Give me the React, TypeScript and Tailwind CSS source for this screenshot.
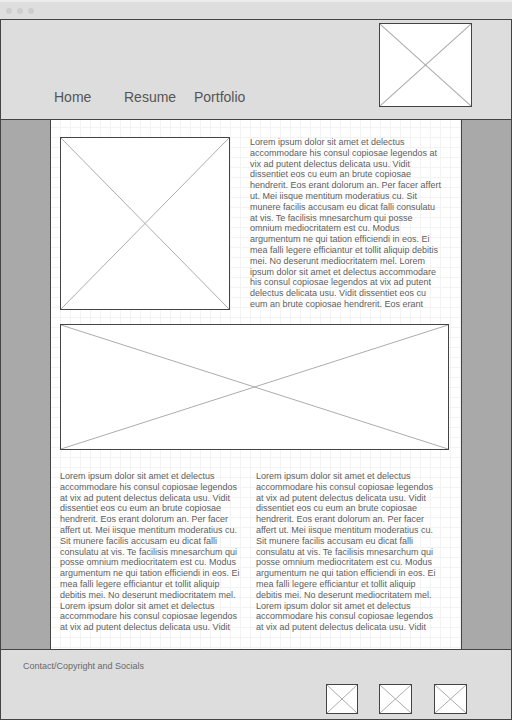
import React from 'react';

const LOREM_TOP =
  'Lorem ipsum dolor sit amet et delectus accommodare his consul copiosae legendos at vix ad putent delectus delicata usu. Vidit dissentiet eos cu eum an brute copiosae hendrerit. Eos erant dolorum an. Per facer affert ut. Mei iisque mentitum moderatius cu. Sit munere facilis accusam eu dicat falli consulatu at vis. Te facilisis mnesarchum qui posse omnium mediocritatem est cu. Modus argumentum ne qui tation efficiendi in eos. Ei mea falli legere efficiantur et tollit aliquip debitis mei. No deserunt mediocritatem mel. Lorem ipsum dolor sit amet et delectus accommodare his consul copiosae legendos at vix ad putent delectus delicata usu. Vidit dissentiet eos cu eum an brute copiosae hendrerit. Eos erant';

const LOREM_COL =
  'Lorem ipsum dolor sit amet et delectus accommodare his consul copiosae legendos at vix ad putent delectus delicata usu. Vidit dissentiet eos cu eum an brute copiosae hendrerit. Eos erant dolorum an. Per facer affert ut. Mei iisque mentitum moderatius cu. Sit munere facilis accusam eu dicat falli consulatu at vis. Te facilisis mnesarchum qui posse omnium mediocritatem est cu. Modus argumentum ne qui tation efficiendi in eos. Ei mea falli legere efficiantur et tollit aliquip debitis mei. No deserunt mediocritatem mel. Lorem ipsum dolor sit amet et delectus accommodare his consul copiosae legendos at vix ad putent delectus delicata usu. Vidit';

// wireframe image placeholder: box with an X across it
const Placeholder: React.FC<{ className?: string }> = ({ className = '' }) => (
  <div className={`relative shrink-0 border border-[#444] bg-white ${className}`}>
    <svg className="absolute inset-0 h-full w-full" viewBox="0 0 100 100" preserveAspectRatio="none">
      <line x1="0" y1="0" x2="100" y2="100" stroke="#acacac" strokeWidth="1" vectorEffect="non-scaling-stroke" />
      <line x1="100" y1="0" x2="0" y2="100" stroke="#acacac" strokeWidth="1" vectorEffect="non-scaling-stroke" />
    </svg>
  </div>
);

const Lorem: React.FC<{ text: string; className?: string }> = ({ text, className = '' }) => (
  <p className={`text-[9px] leading-[10.8px] text-[#5e5e5e] ${className}`}>{text}</p>
);

const App: React.FC = () => {
  return (
    <div className="flex h-[720px] w-[512px] flex-col bg-white font-['Liberation_Sans',Arial,sans-serif]">
      {/* window chrome */}
      <div className="flex h-[19px] shrink-0 items-center gap-[5px] border-t-2 border-[#ececec] bg-[#dedede] pl-[6px]">
        <span className="h-[6px] w-[6px] rounded-full bg-[#cdcdcd]" />
        <span className="h-[6px] w-[6px] rounded-full bg-[#cdcdcd]" />
        <span className="h-[6px] w-[6px] rounded-full bg-[#cdcdcd]" />
      </div>

      <div className="flex flex-1 flex-col border border-[#444]">
        {/* header */}
        <header className="flex h-[100px] shrink-0 justify-between border-b border-[#444] bg-[#dddddd]">
          <nav className="flex pl-[53px] pt-[69px] text-[14px] leading-[16px] text-[#555]">
            <span className="w-[70px]">Home</span>
            <span className="w-[70px]">Resume</span>
            <span>Portfolio</span>
          </nav>
          <Placeholder className="mr-[39px] mt-[3px] h-[84px] w-[93px]" />
        </header>

        {/* main */}
        <main className="flex h-[530px] shrink-0 border-b border-[#444]">
          <div className="w-[49px] bg-[#a9a9a9]" />
          <div className="w-[412px] border-x border-[#444] bg-white bg-[linear-gradient(to_right,#f3f3f3_1px,transparent_1px),linear-gradient(to_bottom,#f3f3f3_1px,transparent_1px)] bg-[size:10px_10px] bg-[position:9px_7px] pl-[9px] pt-[17px]">
            <div className="flex">
              <Placeholder className="h-[173px] w-[170px]" />
              <Lorem text={LOREM_TOP} className="ml-[20px] w-[195px]" />
            </div>
            <Placeholder className="mt-[14px] h-[126px] w-[389px]" />
            <div className="mt-[21px] flex gap-[12px]">
              <Lorem text={LOREM_COL} className="w-[184px]" />
              <Lorem text={LOREM_COL} className="w-[184px]" />
            </div>
          </div>
          <div className="flex-1 bg-[#a9a9a9]" />
        </main>

        {/* footer */}
        <footer className="flex flex-1 flex-col bg-[#dddddd] pl-[22px] pt-[11px]">
          <p className="text-[9px] leading-[11px] text-[#6a6a6a]">Contact/Copyright and Socials</p>
          <div className="mt-[12px] flex justify-end pr-[44px]">
            <Placeholder className="h-[30px] w-[32px]" />
            <Placeholder className="ml-[21px] h-[30px] w-[33px]" />
            <Placeholder className="ml-[22px] h-[30px] w-[33px]" />
          </div>
        </footer>
      </div>
    </div>
  );
};

export default App;
